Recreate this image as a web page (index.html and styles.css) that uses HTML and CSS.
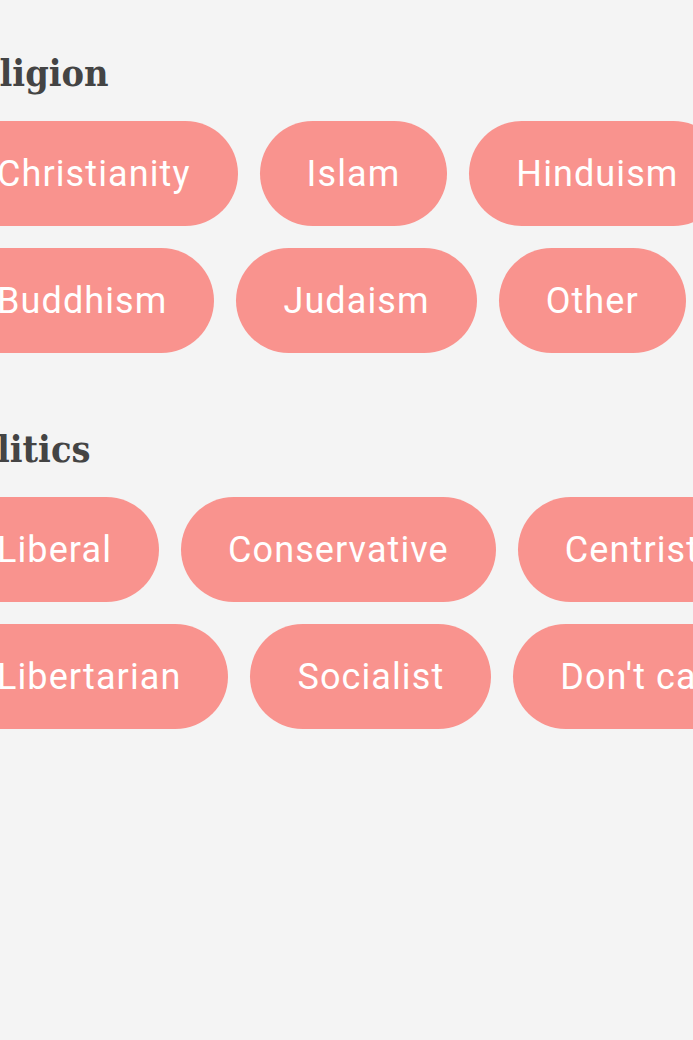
FILE: index.html
```html
<!DOCTYPE html>
<html>
<head>
<meta charset="utf-8">
<link rel="stylesheet" href="styles.css">
</head>
<body>
<div class="page">
  <section class="group">
    <h2 class="group-title">Religion</h2>
    <div class="chips">
      <div class="chip-row">
        <span class="chip">Christianity</span>
        <span class="chip">Islam</span>
        <span class="chip">Hinduism</span>
      </div>
      <div class="chip-row">
        <span class="chip">Buddhism</span>
        <span class="chip">Judaism</span>
        <span class="chip">Other</span>
      </div>
    </div>
  </section>
  <section class="group">
    <h2 class="group-title">Politics</h2>
    <div class="chips">
      <div class="chip-row">
        <span class="chip">Liberal</span>
        <span class="chip">Conservative</span>
        <span class="chip">Centrist</span>
      </div>
      <div class="chip-row">
        <span class="chip">Libertarian</span>
        <span class="chip">Socialist</span>
        <span class="chip">Don't care</span>
      </div>
    </div>
  </section>
</div>
</body>
</html>
```
FILE: styles.css
```css
html, body {
  margin: 0;
  padding: 0;
  background: #f4f4f4;
  overflow: hidden;
}
.page {
  margin-left: -50px;
  width: 900px;
  padding-top: 51px;
  display: flex;
  flex-direction: column;
  gap: 74px;
}
.group-title {
  margin: 0 0 26px 0;
  font-family: "DejaVu Serif Condensed", "DejaVu Serif", serif;
  font-weight: bold;
  font-size: 37.5px;
  line-height: 44px;
  color: #444444;
}
.chips {
  display: flex;
  flex-direction: column;
  gap: 22px;
}
.chip-row {
  display: flex;
  gap: 22px;
}
.chip {
  display: inline-flex;
  align-items: center;
  justify-content: center;
  flex: none;
  height: 105px;
  padding: 0 47px;
  border-radius: 53px;
  background: #f9938e;
  color: #ffffff;
  font-family: Roboto, "Liberation Sans", sans-serif;
  font-weight: 400;
  font-size: 36px;
  letter-spacing: 1.1px;
  white-space: nowrap;
}
```
